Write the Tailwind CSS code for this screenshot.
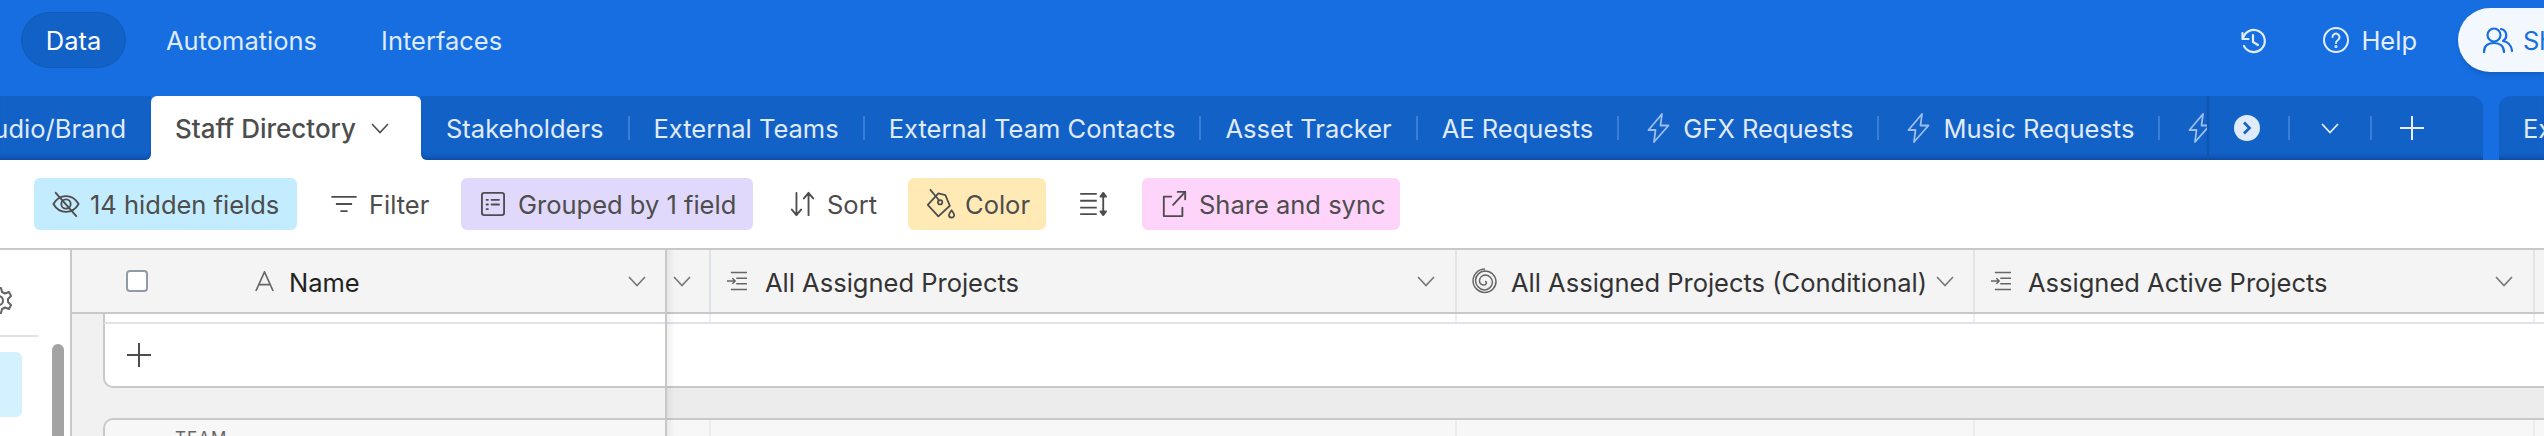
<!DOCTYPE html>
<html lang="en">
<head>
<meta charset="UTF-8">
<title>Staff Directory</title>
<script src="https://cdn.jsdelivr.net/npm/@tailwindcss/browser@4"></script>
</head>
<body class="bg-white">
<div class="w-[2544px] h-[436px] overflow-hidden flex flex-col font-['Inter',sans-serif] text-[25.5px] leading-[32px]">

  <!-- app bar -->
  <div class="h-[96px] shrink-0 bg-[#166ee1] flex items-start">
    <div class="mt-[12px] ml-[21px] h-[56px] w-[105px] rounded-[28px] bg-[#1261c6] border border-[#115bba] text-white flex items-center justify-center"><span class="mt-[2px]">Data</span></div>
    <div class="mt-[12px] h-[56px] ml-[40px] text-[#dfeafa] flex items-center"><span class="mt-[2px]">Automations</span></div>
    <div class="mt-[12px] h-[56px] ml-[64px] text-[#dfeafa] flex items-center"><span class="mt-[2px]">Interfaces</span></div>
    <div class="flex-1"></div>
    <svg class="mt-[27px] w-[28px] h-[28px] text-[#e3edfb]" viewBox="0 0 28 28" fill="none" stroke="currentColor" stroke-width="2.2" stroke-linecap="round" stroke-linejoin="round"><path d="M3.500 6v6h6"/><path d="M4 12a11 11 0 1 1 1 7"/><path d="M14 8v7l5 3"/></svg>
    <div class="w-[56px]"></div>
    <svg class="mt-[27px] w-[26px] h-[26px] text-[#e3edfb]" viewBox="0 0 26 26" fill="none" stroke="currentColor" stroke-width="2" stroke-linecap="round"><circle cx="13" cy="13" r="12"/><path d="M9.500 10a3.500 3.500 0 1 1 5.500 3c-1.300.8-2 1.500-2 3"/><circle cx="13" cy="19.500" r="0.6"/></svg>
    <div class="mt-[12px] h-[56px] ml-[12px] text-[#e3edfb] flex items-center"><span class="mt-[2px]">Help</span></div>
    <div class="mt-[8px] ml-[41px] h-[64px] flex-1 max-w-[86px] rounded-l-[32px] bg-[#f3f8fe] shadow-md overflow-hidden flex items-center pl-[25px] text-[#166ee1] whitespace-nowrap">
      <svg class="w-[30px] h-[26px] shrink-0 mr-[10px]" viewBox="0 0 30 26" fill="none" stroke="currentColor" stroke-width="2.2" stroke-linecap="round" stroke-linejoin="round"><circle cx="11" cy="8" r="6.500"/><path d="M1 25c0-6 4-9 10-9s10 3 10 9"/><path d="M18 2a6.500 6.500 0 0 1 2 12c5 1 8.500 4 9 10"/></svg>
      <span class="mt-[2px]">Share</span>
    </div>
  </div>

  <!-- table tabs -->
  <div class="h-[64px] shrink-0 flex relative bg-[linear-gradient(#166ee1_50%,white_50%)]">
    <div class="w-[151px] shrink-0 overflow-hidden flex justify-end items-center pr-[25px] bg-[#1261c7] rounded-br-[6px] text-[#e0ebfa] shadow-[inset_0_-5px_4px_-3px_rgba(10,60,140,0.7)]"><span class="shrink-0 mt-[2px]">Studio/Brand</span></div>
    <div class="w-[270px] shrink-0 bg-white rounded-t-[6px] flex items-center pl-[24px] font-medium text-[26px] text-[#4d4d4d]">
      <span class="mt-[2px]">Staff Directory</span>
      <svg class="ml-[15px] w-[18px] h-[11px]" viewBox="0 0 18 11" fill="none" stroke="currentColor" stroke-width="1.600"><path d="M1 1l8 8.500L17 1"/></svg>
    </div>
    <div class="w-[1786px] shrink-0 overflow-hidden flex items-center bg-[#1261c7] rounded-bl-[6px] text-[#e0ebfa] whitespace-nowrap shadow-[inset_0_-5px_4px_-3px_rgba(10,60,140,0.7)]">
      <span class="ml-[25px] shrink-0 mt-[2px]">Stakeholders</span>
      <span class="ml-[24px] w-[2px] h-[24px] bg-[#3a7dd4] shrink-0"></span>
      <span class="ml-[24px] shrink-0 mt-[2px]">External Teams</span>
      <span class="ml-[24px] w-[2px] h-[24px] bg-[#3a7dd4] shrink-0"></span>
      <span class="ml-[24px] shrink-0 mt-[2px]">External Team Contacts</span>
      <span class="ml-[24px] w-[2px] h-[24px] bg-[#3a7dd4] shrink-0"></span>
      <span class="ml-[24px] shrink-0 mt-[2px]">Asset Tracker</span>
      <span class="ml-[24px] w-[2px] h-[24px] bg-[#3a7dd4] shrink-0"></span>
      <span class="ml-[24px] shrink-0 mt-[2px]">AE Requests</span>
      <span class="ml-[24px] w-[2px] h-[24px] bg-[#3a7dd4] shrink-0"></span>
      <svg class="ml-[28px] w-[23px] h-[30px] shrink-0 text-[#9dbeec]" viewBox="0 0 23 30" fill="none" stroke="currentColor" stroke-width="1.800" stroke-linejoin="round"><path d="M15 1L1.500 17h7L7 29l14.500-16.500h-8z"/></svg>
      <span class="ml-[13px] shrink-0 mt-[2px]">GFX Requests</span>
      <span class="ml-[24px] w-[2px] h-[24px] bg-[#3a7dd4] shrink-0"></span>
      <svg class="ml-[28px] w-[23px] h-[30px] shrink-0 text-[#9dbeec]" viewBox="0 0 23 30" fill="none" stroke="currentColor" stroke-width="1.800" stroke-linejoin="round"><path d="M15 1L1.500 17h7L7 29l14.500-16.500h-8z"/></svg>
      <span class="ml-[13px] shrink-0 mt-[2px]">Music Requests</span>
      <span class="ml-[24px] w-[2px] h-[24px] bg-[#3a7dd4] shrink-0"></span>
      <svg class="ml-[28px] w-[23px] h-[30px] shrink-0 text-[#9dbeec]" viewBox="0 0 23 30" fill="none" stroke="currentColor" stroke-width="1.800" stroke-linejoin="round"><path d="M15 1L1.500 17h7L7 29l14.500-16.500h-8z"/></svg>
    </div>
    <div class="w-[276px] shrink-0 bg-[#1261c7] rounded-tr-[12px] flex items-center border-l-2 border-[#0f55ae] shadow-[inset_0_-5px_4px_-3px_rgba(10,60,140,0.7)] text-[#e8f0fc]">
      <div class="ml-[25px] w-[26px] h-[26px] rounded-full bg-[#dfeafa] flex items-center justify-center">
        <svg class="w-[10px] h-[14px] text-[#1261c7]" viewBox="0 0 10 14" fill="none" stroke="currentColor" stroke-width="2.600"><path d="M2 1.500L7.500 7 2 12.500"/></svg>
      </div>
      <span class="ml-[28px] w-[2px] h-[24px] bg-[#3a7dd4]"></span>
      <svg class="ml-[31px] w-[18px] h-[11px]" viewBox="0 0 18 11" fill="none" stroke="currentColor" stroke-width="1.800"><path d="M1 1l8 8.500L17 1"/></svg>
      <span class="ml-[31px] w-[2px] h-[24px] bg-[#3a7dd4]"></span>
      <svg class="ml-[28px] w-[24px] h-[24px]" viewBox="0 0 24 24" fill="none" stroke="currentColor" stroke-width="2"><path d="M12 0v24M0 12h24"/></svg>
    </div>
    <div class="w-[16px] shrink-0 bg-[#166ee1]"></div>
    <div class="flex-1 bg-[#1261c7] rounded-tl-[12px] pl-[24px] flex items-center text-[#e0ebfa] overflow-hidden whitespace-nowrap shadow-[inset_0_-5px_4px_-3px_rgba(10,60,140,0.7)]"><span class="shrink-0 mt-[2px]">External</span></div>
  </div>

  <!-- view toolbar -->
  <div class="h-[90px] shrink-0 border-b-2 border-[#c8c8c8] pt-[18px] pl-[34px] flex items-start gap-[16px] text-[#4d4d4d]">
    <div class="h-[52px] w-[263px] rounded-[6px] bg-[#c4ecff] flex items-center pl-[17px]">
      <svg class="w-[30px] h-[28px] shrink-0 mr-[9px]" viewBox="0 0 30 30" fill="none" stroke="currentColor" stroke-width="2" stroke-linecap="round" stroke-linejoin="round"><path d="M1.500 15C5 9 9.500 6.500 15 6.500S25 9 28.500 15c-3.500 6-8 8.500-13.500 8.500S5 21 1.500 15z"/><circle cx="15" cy="15" r="5"/><path d="M4 3l22 25"/></svg>
      <span class="whitespace-nowrap mt-[2px]">14 hidden fields</span>
    </div>
    <div class="h-[52px] w-[132px] flex items-center pl-[17px]">
      <svg class="w-[28px] h-[18px] shrink-0 mr-[11px]" viewBox="0 0 28 20" fill="none" stroke="currentColor" stroke-width="2"><path d="M0 2h28M5 10h18M10 18h8"/></svg>
      <span class="mt-[2px]">Filter</span>
    </div>
    <div class="h-[52px] w-[292px] rounded-[6px] bg-[#e0d9fc] flex items-center pl-[19px]">
      <svg class="w-[26px] h-[24px] shrink-0 mr-[12px]" viewBox="0 0 26 26" fill="none" stroke="currentColor" stroke-width="2" stroke-linecap="round"><rect x="1" y="1" width="24" height="24" rx="2.500"/><path d="M6 8.500h1.500M11.500 8.500h8M6 13.500h1.500M11.500 13.500h8M6 18.500h1.500"/></svg>
      <span class="whitespace-nowrap mt-[2px]">Grouped by 1 field</span>
    </div>
    <div class="h-[52px] w-[123px] flex items-center pl-[21px]">
      <svg class="w-[25px] h-[26px] shrink-0 mr-[12px]" viewBox="0 0 25 28" fill="none" stroke="currentColor" stroke-width="2" stroke-linecap="round" stroke-linejoin="round"><path d="M6 2v24M1 20l5 6 5-6M19 26V2M14 8l5-6 5 6"/></svg>
      <span class="mt-[2px]">Sort</span>
    </div>
    <div class="h-[52px] w-[138px] rounded-[6px] bg-[#ffeab6] flex items-center pl-[17px]">
      <svg class="w-[32px] h-[30px] shrink-0 mr-[8px]" viewBox="0 0 32 34" fill="none" stroke="currentColor" stroke-width="2" stroke-linecap="round" stroke-linejoin="round"><path d="M13 5L1 18l12 13 13-12-5-12z"/><circle cx="15" cy="15" r="2.500"/><path d="M4 1l10 12"/><path d="M28 24c-2 3-3 4-3 5.500a3 3 0 0 0 6 0c0-1.500-1-2.500-3-5.500z"/></svg>
      <span class="mt-[2px]">Color</span>
    </div>
    <div class="h-[52px] w-[64px] flex items-center pl-[17px]">
      <svg class="w-[30px] h-[24px] shrink-0" viewBox="0 0 30 26" fill="none" stroke="currentColor" stroke-width="2" stroke-linejoin="round"><path d="M0 2h18M0 9.500h18M0 17h18M0 24h18M25 2v22"/><path d="M22 5l3-4 3 4zM22 21l3 4 3-4z" fill="currentColor"/></svg>
    </div>
    <div class="h-[52px] w-[258px] rounded-[6px] bg-[#ffd4fb] flex items-center pl-[20px]">
      <svg class="w-[25px] h-[26px] shrink-0 mr-[12px]" viewBox="0 0 25 28" fill="none" stroke="currentColor" stroke-width="2" stroke-linecap="round" stroke-linejoin="round"><path d="M9 6H1v21h20v-9"/><path d="M16 1h8v8"/><path d="M24 1L11 15"/></svg>
      <span class="whitespace-nowrap mt-[2px]">Share and sync</span>
    </div>
  </div>

  <!-- grid area -->
  <div class="flex-1 flex min-h-0">

    <!-- sidebar -->
    <div class="w-[72px] shrink-0 border-r-2 border-[#c8c8c8] flex overflow-hidden">
      <div class="w-[52px] shrink-0">
        <div class="h-[87px] w-[38px] border-b-2 border-[#e2e2e2] overflow-hidden pt-[37px]">
          <svg class="-ml-[15px] w-[27px] h-[27px] text-[#666]" viewBox="0 0 27 27" fill="none" stroke="currentColor" stroke-width="2" stroke-linejoin="round"><circle cx="13.500" cy="13.500" r="4.500"/><path d="M11 1h5l1 4 3 1.500 4-1.500 2 4-3 3v3l3 3-2 4-4-1.500-3 1.500-1 4h-5l-1-4-3-1.500-4 1.500-2-4 3-3v-3l-3-3 2-4 4 1.500 3-1.500z"/></svg>
        </div>
        <div class="mt-[15px] h-[65px] w-[22px] rounded-r-[6px] bg-[#d4f1ff]"></div>
      </div>
      <div class="w-[12px] shrink-0 mt-[94px] rounded-t-[6px] bg-[#a3a3a3]"></div>
    </div>

    <!-- frozen column -->
    <div class="w-[595px] shrink-0 border-r-2 border-[#c8c8c8] flex flex-col">
      <div class="h-[64px] shrink-0 bg-[#f4f4f4] border-b-2 border-[#c8c8c8] flex items-center">
        <div class="ml-[54px] w-[22px] h-[22px] rounded-[4px] border-2 border-[#8f9ba8] bg-white"></div>
        <svg class="ml-[106px] w-[21px] h-[20px] text-[#666] shrink-0" viewBox="0 0 21 22" fill="none" stroke="currentColor" stroke-width="1.800"><path d="M1 22L10.500 1 20 22M4.500 15h12"/></svg>
        <span class="ml-[14px] text-[#222] font-normal mt-[3px]">Name</span>
        <div class="flex-1"></div>
        <svg class="mr-[19px] w-[18px] h-[11px] text-[#777]" viewBox="0 0 18 11" fill="none" stroke="currentColor" stroke-width="1.600"><path d="M1 1l8 8.500L17 1"/></svg>
      </div>
      <div class="flex-1 bg-[#f1f1f1] pl-[31px] flex flex-col">
        <div class="h-[10px] bg-white border-l-2 border-[#c8c8c8] border-b-2 border-b-[#dfe3e8]"></div>
        <div class="h-[64px] bg-white border-l-2 border-b-2 border-[#c8c8c8] rounded-bl-[10px] flex items-center pl-[22px]">
          <svg class="w-[24px] h-[24px] text-[#4d4d4d]" viewBox="0 0 24 24" fill="none" stroke="currentColor" stroke-width="2"><path d="M12 0v24M0 12h24"/></svg>
        </div>
        <div class="h-[30px]"></div>
        <div class="flex-1 bg-[#f7f7f7] border-l-2 border-t-2 border-[#c8c8c8] rounded-tl-[10px] pl-[70px] pt-[7px] text-[17px] leading-[22px] tracking-[1px] text-[#666]">TEAM</div>
      </div>
    </div>

    <!-- scrolling columns -->
    <div class="flex-1 relative min-w-0 flex flex-col">
      <div class="absolute left-0 top-0 bottom-0 w-[8px] bg-gradient-to-r from-black/6 to-transparent"></div>
      <div class="h-[64px] shrink-0 bg-[#f4f4f4] border-b-2 border-[#c8c8c8] flex items-center text-[#333]">
        <div class="w-[44px] h-full border-r-2 border-[#dce3ea] flex items-center pl-[6px]">
          <svg class="w-[18px] h-[11px] text-[#777]" viewBox="0 0 18 11" fill="none" stroke="currentColor" stroke-width="1.600"><path d="M1 1l8 8.500L17 1"/></svg>
        </div>
        <div class="w-[746px] h-full border-r-2 border-[#e4e4e4] flex items-center pl-[13px] pr-[20px]">
          <svg class="w-[26px] h-[20px] shrink-0 text-[#666] mr-[15px]" viewBox="0 0 26 26" fill="none" stroke="currentColor" stroke-width="2"><path d="M5 2h21M12 9.500h14M0 13h10M7 9.500l3.500 3.500L7 16.500M12 16.500h14M5 24h21"/></svg>
          <span class="mt-[3px]">All Assigned Projects</span>
          <div class="flex-1"></div>
          <svg class="w-[18px] h-[11px] text-[#777]" viewBox="0 0 18 11" fill="none" stroke="currentColor" stroke-width="1.600"><path d="M1 1l8 8.500L17 1"/></svg>
        </div>
        <div class="w-[518px] h-full border-r-2 border-[#e4e4e4] flex items-center pl-[15px] pr-[19px]">
          <svg class="w-[26px] h-[26px] shrink-0 text-[#666] mr-[13px]" viewBox="0 0 26 26" fill="none" stroke="currentColor" stroke-width="1.500"><path d="M13 13.500a1.500 1.500 0 0 1 1.500 1.500 3 3 0 0 1-3.500 2 4.500 4.500 0 0 1-3.500-4.500A6 6 0 0 1 13 7a7.500 7.500 0 0 1 7.500 7.500A8.500 8.500 0 0 1 12 22a10 10 0 0 1-8.500-9.500A9.800 9.800 0 0 1 13 3a11 11 0 0 1 11 10.500 11 11 0 0 1-11 11A12 12 0 0 1 1 13 12 12 0 0 1 13 1"/></svg>
          <span class="whitespace-nowrap mt-[3px]">All Assigned Projects (Conditional)</span>
          <div class="flex-1"></div>
          <svg class="w-[18px] h-[11px] text-[#777]" viewBox="0 0 18 11" fill="none" stroke="currentColor" stroke-width="1.600"><path d="M1 1l8 8.500L17 1"/></svg>
        </div>
        <div class="w-[560px] h-full border-r-2 border-[#e4e4e4] flex items-center pl-[13px] pr-[20px]">
          <svg class="w-[26px] h-[20px] shrink-0 text-[#666] mr-[14px]" viewBox="0 0 26 26" fill="none" stroke="currentColor" stroke-width="2"><path d="M5 2h21M12 9.500h14M0 13h10M7 9.500l3.500 3.500L7 16.500M12 16.500h14M5 24h21"/></svg>
          <span class="whitespace-nowrap mt-[3px]">Assigned Active Projects</span>
          <div class="flex-1"></div>
          <svg class="w-[18px] h-[11px] text-[#777]" viewBox="0 0 18 11" fill="none" stroke="currentColor" stroke-width="1.600"><path d="M1 1l8 8.500L17 1"/></svg>
        </div>
      </div>
      <div class="h-[10px] shrink-0 bg-white border-b-2 border-[#dfe3e8] flex">
        <div class="w-[44px] border-r-2 border-[#eef1f4]"></div>
        <div class="w-[746px] border-r-2 border-[#eeeeee]"></div>
        <div class="w-[518px] border-r-2 border-[#eeeeee]"></div>
        <div class="w-[560px] border-r-2 border-[#eeeeee]"></div>
      </div>
      <div class="h-[64px] shrink-0 bg-white border-b-2 border-[#c8c8c8]"></div>
      <div class="h-[30px] shrink-0 bg-[#ececec]"></div>
      <div class="flex-1 bg-[#f7f7f7] border-t-2 border-[#c8c8c8] flex">
        <div class="w-[44px] border-r-2 border-[#ececec]"></div>
        <div class="w-[746px] border-r-2 border-[#ececec]"></div>
        <div class="w-[518px] border-r-2 border-[#ececec]"></div>
        <div class="w-[560px] border-r-2 border-[#ececec]"></div>
      </div>
    </div>
  </div>
</div>
</body>
</html>
